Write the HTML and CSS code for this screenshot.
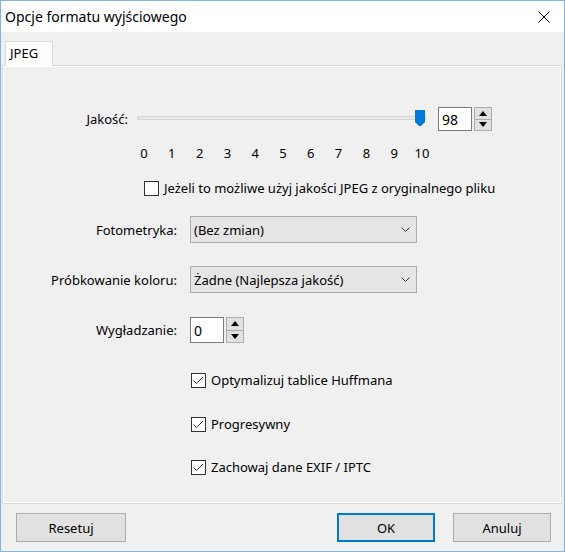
FILE: index.html
```html
<!DOCTYPE html>
<html lang="pl">
<head>
<meta charset="utf-8">
<title>Opcje formatu wyjściowego</title>
<link rel="stylesheet" href="styles.css">
</head>
<body>
<div class="window">
  <div class="titlebar">
    <span class="title">Opcje formatu wyjściowego</span>
    <svg class="close" width="12" height="12" viewBox="0 0 12 12"><path d="M0.5 0.5 L11.5 11.5 M11.5 0.5 L0.5 11.5" stroke="#000" stroke-width="1" fill="none"/></svg>
  </div>
  <div class="client">
    <div class="tabs"><div class="tab">JPEG</div></div>
    <div class="panel">
      <div class="row row-quality">
        <span class="lbl-quality">Jakość:</span>
        <div class="slider">
          <div class="track"></div>
          <svg class="thumb" style="left:278px" width="10" height="16" viewBox="0 0 10 16"><polygon points="0,0 10,0 10,12 6,16 4,16 0,12" fill="#0078d7"/></svg>
        </div>
        <div class="spin spin-q">
          <div class="edit">98</div>
          <div class="arrows">
            <div class="arr"><svg width="8" height="5" viewBox="0 0 8 5"><polygon points="0,5 4,0 8,5" fill="#000"/></svg></div>
            <div class="arr"><svg width="8" height="5" viewBox="0 0 8 5"><polygon points="0,0 8,0 4,5" fill="#000"/></svg></div>
          </div>
        </div>
      </div>
      <div class="row scale">
        <span>0</span><span>1</span><span>2</span><span>3</span><span>4</span><span>5</span><span>6</span><span>7</span><span>8</span><span>9</span><span>10</span>
      </div>
      <label class="row check check-orig"><span class="box"></span><span>Jeżeli to możliwe użyj jakości JPEG z oryginalnego pliku</span></label>
      <div class="row field field-foto">
        <span class="flabel">Fotometryka:</span>
        <div class="combo"><span>(Bez zmian)</span><svg width="9" height="5" viewBox="0 0 9 5"><path d="M0.5 0.5 L4.5 4.5 L8.5 0.5" stroke="#333" fill="none"/></svg></div>
      </div>
      <div class="row field field-prob">
        <span class="flabel">Próbkowanie koloru:</span>
        <div class="combo"><span>Żadne (Najlepsza jakość)</span><svg width="9" height="5" viewBox="0 0 9 5"><path d="M0.5 0.5 L4.5 4.5 L8.5 0.5" stroke="#333" fill="none"/></svg></div>
      </div>
      <div class="row field field-smooth">
        <span class="flabel">Wygładzanie:</span>
        <div class="spin spin-s">
          <div class="edit">0</div>
          <div class="arrows">
            <div class="arr"><svg width="8" height="5" viewBox="0 0 8 5"><polygon points="0,5 4,0 8,5" fill="#000"/></svg></div>
            <div class="arr"><svg width="8" height="5" viewBox="0 0 8 5"><polygon points="0,0 8,0 4,5" fill="#000"/></svg></div>
          </div>
        </div>
      </div>
      <label class="row check check-opt cb1"><span class="box"><svg width="15" height="15" viewBox="0 0 15 15"><path d="M2.5 7.5 L5.5 10.5 L12 4" stroke="#333" stroke-width="1" fill="none"/></svg></span><span>Optymalizuj tablice Huffmana</span></label>
      <label class="row check check-opt cb2"><span class="box"><svg width="15" height="15" viewBox="0 0 15 15"><path d="M2.5 7.5 L5.5 10.5 L12 4" stroke="#333" stroke-width="1" fill="none"/></svg></span><span>Progresywny</span></label>
      <label class="row check check-opt cb3"><span class="box"><svg width="15" height="15" viewBox="0 0 15 15"><path d="M2.5 7.5 L5.5 10.5 L12 4" stroke="#333" stroke-width="1" fill="none"/></svg></span><span>Zachowaj dane EXIF / IPTC</span></label>
    </div>
    <div class="buttons">
      <div class="btn btn-reset">Resetuj</div>
      <div class="spacer"></div>
      <div class="btn btn-ok">OK</div>
      <div class="btn btn-cancel">Anuluj</div>
    </div>
  </div>
</div>
</body>
</html>
```

FILE: styles.css
```css
* { box-sizing: border-box; }
html, body { margin: 0; padding: 0; background: #f0f0f0; }
body { font-family: "Noto Sans", "Open Sans", sans-serif; font-size: 13px; color: #000; }

.window {
  width: 565px; height: 552px;
  border: 1px solid #7fb5e6;
  display: flex; flex-direction: column;
  background: #f0f0f0;
}
.titlebar {
  height: 31px; background: #fff;
  display: flex; align-items: center;
  padding-left: 4px;
}
.title { font-size: 14px; flex: 1; margin-top: -1px; }
.close { margin-right: 14px; margin-top: 1px; }

.client { flex: 1; display: flex; flex-direction: column; }
.tabs { height: 33px; display: flex; align-items: flex-end; padding-left: 4px; position: relative; z-index: 1; }
.tab {
  width: 48px; height: 25px; margin-bottom: -1px;
  background: #fff; border: 1px solid #d9d9d9; border-bottom: none;
  padding-left: 4px; line-height: 23px;
}
.panel {
  margin-left: 1px; width: 560px; height: 439px;
  border: 1px solid #d9d9d9;
  box-shadow: inset 0 0 0 1px #fff;
  display: flex; flex-direction: column;
}
.row { display: flex; align-items: center; }

.row-quality { margin-top: 41px; height: 24px; }
.lbl-quality { width: 125px; text-align: right; }
.slider { position: relative; width: 289px; height: 24px; margin-left: 9px; }
.track { position: absolute; left: 0; right: 0; top: 9px; height: 4px; background: #e7e7e7; border: 1px solid #d6d6d6; }
.thumb { position: absolute; top: 3px; }

.spin { display: flex; align-items: stretch; }
.spin-q { margin-left: 12px; height: 24px; }
.edit { background: #fff; border: 1px solid #7a7a7a; padding-left: 3px; display: flex; align-items: center; }
.spin-q .edit { width: 34px; font-size: 14px; }
.arrows { display: flex; flex-direction: column; margin-left: 2px; width: 18px; }
.arr { flex: 1; background: #e1e1e1; border: 1px solid #adadad; display: flex; align-items: center; justify-content: center; }
.arr + .arr { border-top: none; }

.scale { margin-top: 14px; margin-left: 131px; width: 298px; height: 16px; justify-content: space-between; }
.scale span { width: 20px; text-align: center; }

.check { height: 16px; }
.box { width: 15px; height: 15px; background: #fff; border: 1px solid #333; margin-right: 5px; display: flex; }
.box svg { margin: -1px; }
.check-orig { margin-top: 19px; margin-left: 141px; }

.flabel { width: 174px; text-align: right; margin-right: 13px; }
.field-foto { margin-top: 20px; height: 27px; }
.field-prob { margin-top: 23px; height: 27px; }
.field-smooth { margin-top: 24px; height: 26px; }
.combo {
  width: 227px; height: 27px; background: #e5e5e5; border: 1px solid #acacac;
  display: flex; align-items: center; justify-content: space-between;
  padding-left: 3px; padding-right: 6px;
}
.spin-s { height: 26px; }
.spin-s .edit { width: 34px; font-size: 14px; }
.spin-s .arrows { margin-left: 2px; }

.check-opt { margin-left: 188px; }
.cb1 { margin-top: 29px; }
.cb2 { margin-top: 28px; }
.cb3 { margin-top: 27px; }

.buttons { display: flex; margin-top: 9px; padding-left: 15px; padding-right: 13px; }
.btn {
  height: 29px; background: #e1e1e1; border: 1px solid #adadad;
  display: flex; align-items: center; justify-content: center;
}
.btn-reset { width: 110px; }
.spacer { flex: 1; }
.btn-ok { width: 98px; border: 2px solid #0078d7; }
.btn-cancel { width: 98px; margin-left: 18px; }
```
